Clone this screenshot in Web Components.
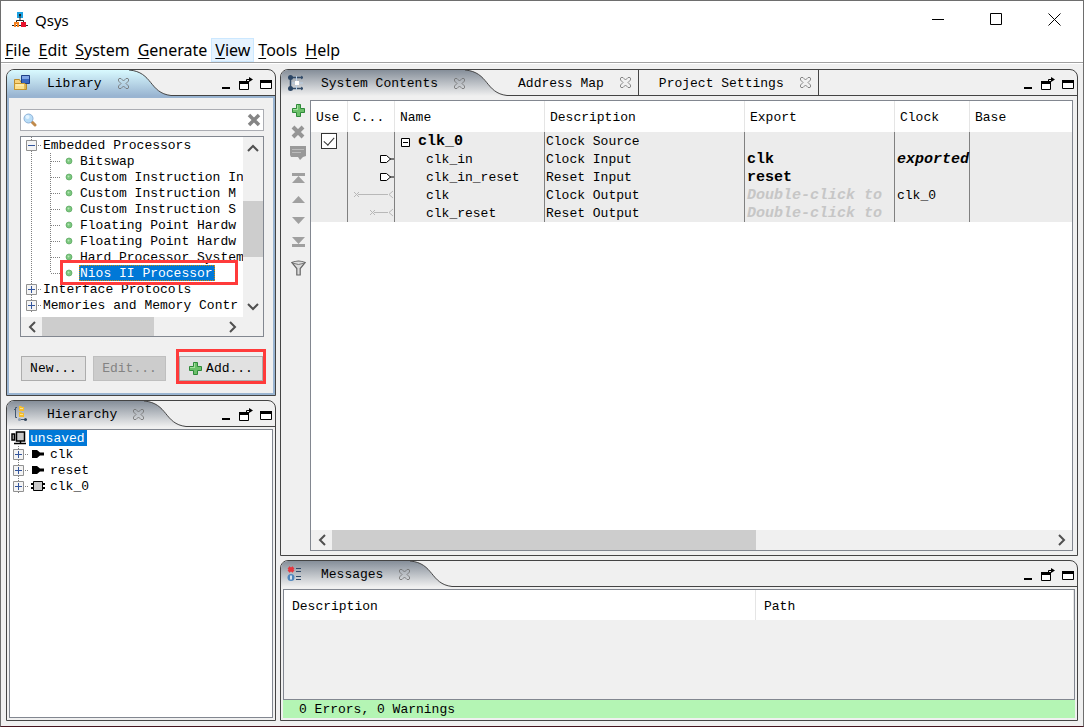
<!DOCTYPE html>
<html lang="en">
<head>
<meta charset="utf-8">
<title>Qsys</title>
<style>
  * { box-sizing: border-box; }
  body {
    margin: 0;
    height: 100vh;
    font: 13px/16px "Liberation Mono", "Noto Sans CJK SC", monospace;
    color: #000;
    background: #f0f0f0;
  }
</style>
</head>
<body>
<qsys-app></qsys-app>

<script>
// ================== //
// icons
const icons = {
  app: [16, 16, `<path fill="#1ba1e2" d="M5 0h6v6H5z"/><path fill="none" stroke="#222" d="M8 3v6M4.500 12V8.500h7V12M0 13.500h16"/><path fill="#222" d="M7 2h2v2H7z"/><path fill="#f58220" d="M2 10h5v5H5v-3H4v3H2z"/><path fill="#e8112d" d="M9 10h5v5H9z"/>`],
  library: [18, 18, `<path fill="#f7d27a" stroke="#b98a2b" d="M1.500 5.500h5l1 2h6v8h-12z"/><path fill="#3a68c0" stroke="#1f3f86" d="M8.500 1.500h8v8h-8z"/><path fill="#7fa5e6" d="M9 2h7v3H9z"/><path fill="#fbe08f" stroke="#c6952d" d="M1.500 15.500v-6h10.500v6z"/><path fill="#fff3c4" d="M3 10.500h8v1H3z"/>`],
  hierarchy: [16, 16, `<path fill="none" stroke="#44586f" d="M4 1.500H2.500v10H4M1 3.500h2M6 13.500h8"/><path fill="#f5bd2b" d="M6 0h2l1 1h2v4H6zM6 6h2l1 1h2v4H6z"/><path fill="#fbe08f" d="M7 2h3v1H7zM7 8h3v1H7z"/><circle cx="6.500" cy="13.500" r="1.500" fill="#8e9db0"/><circle cx="12.500" cy="13.500" r="1.500" fill="#33475e"/>`],
  system: [18, 18, `<path fill="none" stroke="#324b69" stroke-width="1.500" d="M3.500 3v11M3 3.500h13M3 14.500h13"/><path stroke="#324b69" d="M14 2l2 1.500-2 1.500M14 13l2 1.500-2 1.500" fill="none"/><circle cx="3.500" cy="3.500" r="2.500" fill="#2c4665"/><circle cx="3.500" cy="14.500" r="2.500" fill="#2c4665"/><path stroke="#b9cfe6" d="M9.500 2v14M5 9h11"/><path fill="#fff" d="M8 7h4v4H8z"/>`],
  messages: [16, 16, `<path fill="none" stroke="#e5373f" stroke-width="3" d="M1.500 1.500l5 4M6.500 1.500l-5 4"/><circle cx="4" cy="11.500" r="3.500" fill="#4f86bd"/><path stroke="#fff" stroke-width="1.500" d="M4 9.500v4"/><path stroke="#324b69" d="M9 2.500h5M9 5.500h5M9 10.500h5M9 13.500h5"/>`],
  tabClose: [11, 11, `<path fill="none" stroke="#707070" stroke-width=".8" d="M1 .5h2l2.500 2.500L8 .5h2l.5.5v2L8 5.500 10.500 8v2l-.5.5H8L5.500 8 3 10.500H1L.5 10V8L3 5.500.5 3V1z"/>`],
  minimize: [12, 14, `<path d="M2 10h8v2H2z"/>`],
  popout: [14, 14, `<path fill="#fff" stroke="#000" d="M.5 4.500h9v8h-9z"/><path d="M0 4h10v3H0z"/><path fill="none" stroke="#000" d="M7.500 5V2.500H12"/><path d="M10 0l4 2.500-4 2.500z"/>`],
  maximize: [12, 14, `<path fill="#fff" stroke="#000" d="M.5 3.500h11v8H.5z"/><path d="M0 3h12v3H0z"/>`],
  winMin: [13, 13, `<path d="M0 6h12v1H0z"/>`],
  winMax: [13, 13, `<path fill="none" stroke="#000" d="M.5.5h11v11H.5z"/>`],
  winClose: [13, 13, `<path fill="none" stroke="#000" d="M.5.5l12 12M12.500.5l-12 12"/>`],
  search: [14, 14, `<path stroke="#c08a4b" stroke-width="3" stroke-linecap="round" d="M9 9l3 3"/><circle cx="5.500" cy="5.500" r="4.500" fill="#b9ddf7" stroke="#8fb2d8"/><circle cx="4.500" cy="4" r="2" fill="#e4f4ff"/>`],
  clear: [14, 14, `<path stroke="#858585" stroke-width="3.500" d="M2 2l10 10M12 2L2 12"/>`],
  plus: [13, 13, `<path fill="#6cc06a" stroke="#2f8a3a" d="M4.500.5h4v4h4v4h-4v4h-4v-4h-4v-4h4z"/><path fill="#a6dfa0" d="M5 1h1v5H1V5h4z"/>`],
  cross: [14, 14, `<path stroke="#959595" stroke-width="4" d="M2 2l10 10M12 2L2 12"/>`],
  edit: [16, 16, `<path fill="#999" d="M0 1h16v10l-3 1-3 3-2-3H1l-1-2z"/><path stroke="#bbb" d="M2 4.500h12M2 7.500h9"/>`],
  top: [13, 11, `<path fill="#a0a0a0" d="M0 0h13v3H0zM6.500 3l6.500 7H0z"/>`],
  up: [13, 11, `<path fill="#a0a0a0" d="M6.500 2L13 9H0z"/>`],
  down: [13, 11, `<path fill="#a0a0a0" d="M6.500 9L0 2h13z"/>`],
  bottom: [13, 11, `<path fill="#a0a0a0" d="M0 8h13v3H0zM6.500 8L0 1h13z"/>`],
  filter: [15, 16, `<path fill="#ddd" stroke="#666" stroke-width="1.200" d="M.8 2.500q6.700-3 13.400 0L9.200 8.500V15H5.800V8.500z"/><path fill="none" stroke="#777" d="M1 3q6.500 3 13 0"/>`],
  ball: [8, 8, `<circle cx="4" cy="4" r="3" fill="#7ac77e" stroke="#5aa55f" stroke-width=".7"/><circle cx="3.500" cy="3.500" r="1" fill="#b5e6b5"/>`],
  chip: [16, 14, `<path fill="#c8c8c8" stroke="#000" stroke-width="1.500" d="M5.500 1h8v9h-8zM1 3h2.500v6H1z"/><path stroke="#000" stroke-width="1.500" d="M9.500 10v2M3 12.500h12"/>`],
  port: [16, 10, `<path d="M2 1h5l3 2.500h4v3h-4L7 9H2z"/>`],
  block: [16, 10, `<path stroke="#000" stroke-width="2" d="M1 3h14M1 7h14"/><path fill="#c8c8c8" stroke="#000" d="M3.500.5h9v9h-9z"/>`],
  arrowUp: [12, 8, `<path fill="none" stroke="#505050" stroke-width="2" d="M1 7l5-5 5 5"/>`],
  arrowDown: [12, 8, `<path fill="none" stroke="#505050" stroke-width="2" d="M1 1l5 5 5-5"/>`],
  arrowLeft: [8, 12, `<path fill="none" stroke="#505050" stroke-width="2" d="M7 1L2 6l5 5"/>`],
  arrowRight: [8, 12, `<path fill="none" stroke="#505050" stroke-width="2" d="M1 1l5 5-5 5"/>`],
};

const base = `
  <style>
    * { box-sizing: border-box; }
    button {
      appearance: none;
      border: none;
      background: none;
      padding: 0;
      margin: 0;
      font: inherit;
      color: inherit;
      display: inline-flex;
      align-items: center;
      justify-content: center;
    }
  </style>`;

// every element renders once, into an open shadow root
class QElement extends HTMLElement {
  constructor() {
    super();
    this.attachShadow({ mode: "open" });
  }
  connectedCallback() {
    this.shadowRoot.innerHTML = base + this.render();
  }
}

class QIcon extends QElement {
  render() {
    const [w, h, body] = icons[this.getAttribute("name")];
    return `
      <style>
        :host { display: inline-flex; flex: none; }
        svg { display: block; }
      </style>
      <svg width="${w}" height="${h}" viewBox="0 0 ${w} ${h}" aria-hidden="true">${body}</svg>`;
  }
}

// ================== //
// window chrome
class TitleBar extends QElement {
  render() {
    return `
      <style>
        :host {
          display: flex;
          align-items: center;
          height: 37px;
          padding-left: 11px;
          background: #fff;
          font: 15px/20px "Noto Sans", "Open Sans", sans-serif;
        }
        .title { flex: 1; padding-left: 7px; }
        button { width: 58px; height: 36px; }
      </style>
      <q-icon name="app"></q-icon>
      <span class="title"><slot></slot></span>
      <button aria-label="Minimize window"><q-icon name="winMin"></q-icon></button>
      <button aria-label="Maximize window"><q-icon name="winMax"></q-icon></button>
      <button aria-label="Close window"><q-icon name="winClose"></q-icon></button>`;
  }
}

class MenuBar extends QElement {
  render() {
    const items = this.getAttribute("items").split(",");
    const current = this.getAttribute("current");
    return `
      <style>
        :host {
          display: block;
          background: #fff;
          border-bottom: 1px solid #a0a0a0;
          font: 16px/22px "Noto Sans", "Open Sans", sans-serif;
        }
        nav { display: flex; height: 24px; }
        button { padding: 0 4px; height: 24px; }
        button.current { background: #e5f3ff; box-shadow: inset 0 0 0 1px #cce8ff; }
        u { text-underline-offset: 2px; }
      </style>
      <nav>${items
        .map((t) => `<button class="${t == current ? "current" : ""}"><span><u>${t[0]}</u>${t.slice(1)}</span></button>`)
        .join("")}</nav>`;
  }
}

// ================== //
// docked panel with the curved tab
class DockPanel extends QElement {
  render() {
    const active = this.hasAttribute("active");
    const from = active ? "#d9faff" : "#858e99";
    const to = active ? "#99b4d1" : "#f0f0f0";
    return `
      <style>
        :host {
          display: flex;
          flex-direction: column;
          min-width: 0;
          min-height: 0;
          border: 1px solid #444;
          border-radius: 8px 8px 0 0;
          overflow: hidden;
        }
        header { display: flex; height: 26px; flex: none; }
        .tab {
          display: flex;
          align-items: center;
          padding-left: 6px;
          background: linear-gradient(${from}, ${to});
        }
        .name { width: 18px; margin-right: 16px; display: flex; }
        .label { padding-top: 2px; }
        .tab button { margin-left: 16px; }
        .curve { flex: none; display: block; }
        .rest {
          flex: 1;
          display: flex;
          justify-content: space-between;
          border-bottom: 1px solid #444;
        }
        .tools { display: flex; align-items: center; gap: 7px; padding: 3px 3px 0 0; margin-left: auto; }
        .content {
          flex: 1;
          min-height: 0;
          display: flex;
          flex-direction: column;
          border: ${active ? "2px solid #99b4d1" : "none"};
        }
      </style>
      <header>
        <div class="tab">
          <span class="name"><q-icon name="${this.getAttribute("icon")}"></q-icon></span>
          <span class="label">${this.getAttribute("label")}</span>
          <button aria-label="Close ${this.getAttribute("label")}"><q-icon name="tabClose"></q-icon></button>
        </div>
        <svg class="curve" width="42" height="26" viewBox="0 0 42 26" aria-hidden="true">
          <defs>
            <linearGradient id="g" x2="0" y2="1"><stop stop-color="${from}"/><stop offset="1" stop-color="${to}"/></linearGradient>
          </defs>
          <path fill="url(#g)" d="M0 0C24 2 20 23 42 25.500V26H0z"/>
          <path fill="none" stroke="#444" d="M0 0C24 2 20 23 42 25.500"/>
        </svg>
        <div class="rest">
          <slot name="tabs"></slot>
          <div class="tools">
            <button aria-label="Minimize"><q-icon name="minimize"></q-icon></button>
            <button aria-label="Detach"><q-icon name="popout"></q-icon></button>
            <button aria-label="Maximize"><q-icon name="maximize"></q-icon></button>
          </div>
        </div>
      </header>
      <div class="content"><slot></slot></div>`;
  }
}

class DockTab extends QElement {
  render() {
    return `
      <style>
        :host {
          display: flex;
          align-items: center;
          height: 25px;
          padding: 0 7px 0 20px;
          border-right: 1px solid #444;
        }
        :host([first]) { padding-left: 11px; }
        .label { padding-top: 2px; }
        .close { margin-left: 16px; }
      </style>
      <button class="label"><slot></slot></button>
      <button class="close" aria-label="Close tab"><q-icon name="tabClose"></q-icon></button>`;
  }
}

class ScrollBar extends QElement {
  render() {
    const vertical = this.hasAttribute("vertical");
    return `
      <style>
        :host {
          display: flex;
          flex-direction: ${vertical ? "column" : "row"};
          background: #f0f0f0;
          min-width: 0;
          min-height: 0;
        }
        button { flex: none; width: ${vertical ? "auto" : "21px"}; height: ${vertical ? "21px" : "auto"}; }
        .track { flex: 1; display: flex; flex-direction: inherit; min-width: 0; min-height: 0; }
        .before { flex: 0 0 ${this.getAttribute("from")}%; }
        .thumb { flex: 0 0 ${this.getAttribute("size")}%; background: #cdcdcd; }
      </style>
      <button aria-label="Scroll back"><q-icon name="${vertical ? "arrowUp" : "arrowLeft"}"></q-icon></button>
      <div class="track"><div class="before"></div><div class="thumb"></div></div>
      <button aria-label="Scroll forward"><q-icon name="${vertical ? "arrowDown" : "arrowRight"}"></q-icon></button>`;
  }
}

// ================== //
// tree
const toggleBox = (open) => `
  <path fill="#f4f4f4" stroke="#919191" d="M5.500 3.500h10v10h-10z"/>
  <path stroke="#33559c" d="M7 8.500h7${open ? "" : "M10.500 5v7"}"/>`;

const gutters = {
  open: [21, 0, `<path d="M10.500 0v16M17 8.500h4" stroke="#808080" stroke-dasharray="1 1"/>${toggleBox(true)}`],
  closed: [21, 0, `<path d="M10.500 0v16M17 8.500h4" stroke="#808080" stroke-dasharray="1 1"/>${toggleBox(false)}`],
  small: [19, 2, `<path d="M10.500 0v16M17 8.500h4" stroke="#808080" stroke-dasharray="1 1"/>${toggleBox(false)}`],
  leaf: [39, 0, `<path d="M10.500 0v16M29.500 0v16M30 8.500h9" fill="none" stroke="#808080" stroke-dasharray="1 1"/>`],
  last: [39, 0, `<path d="M10.500 0v16M29.500 0v8M30 8.500h9" fill="none" stroke="#808080" stroke-dasharray="1 1"/>`],
  none: [0, 0, ""],
};

class TreeRow extends QElement {
  render() {
    const [w, x, body] = gutters[this.getAttribute("gutter")];
    const icon = this.getAttribute("icon");
    return `
      <style>
        :host { display: flex; align-items: center; height: 16px; white-space: nowrap; position: relative; }
        svg { display: block; flex: none; }
        .icon { display: flex; justify-content: center; width: 18px; flex: none; }
        .label { height: 16px; padding: 2px 2px 0 1px; line-height: 14px; }
        .icon + .label { margin-left: ${w == 19 ? 2 : 1}px; }
        :host([selected]) .label { background: #0078d7; color: #fff; }
        :host([marked]) .label { outline: 1px dotted #d78800; outline-offset: -1px; }
        .mark { display: none; }
        /* red frame drawn over the row and its neighbours */
        :host([marked]) .mark {
          display: block;
          position: absolute;
          inset: -5px 5px -4px 39px;
          border: 3px solid #ff3b3b;
          z-index: 1;
        }
      </style>
      ${w ? `<svg width="${w}" height="16" viewBox="${x} 0 ${w} 16" aria-hidden="true">${body}</svg>` : ""}
      ${icon ? `<span class="icon"><q-icon name="${icon}"></q-icon></span>` : ""}
      <span class="label"><slot></slot></span>
      <span class="mark"></span>`;
  }
}

class LibraryView extends QElement {
  render() {
    return `
      <style>
        :host { display: flex; flex-direction: column; flex: 1; min-height: 0; padding: 11px 9px 12px 11px; }
        .search {
          display: flex;
          align-items: center;
          height: 22px;
          padding: 0 2px;
          background: #fff;
          border: 1px solid #abadb3;
        }
        input { flex: 1; min-width: 0; border: none; outline: none; font: inherit; background: none; }
        .tree {
          flex: 1;
          min-height: 0;
          margin-top: 5px;
          display: grid;
          grid-template: minmax(0, 1fr) 19px / minmax(0, 1fr) 20px;
          border: 1px solid #828790;
        }
        .view { background: #fff; overflow: hidden; }
        .actions { display: flex; gap: 7px; margin-top: 19px; padding: 0 1px; }
        .actions button { height: 25px; padding: 0 7px; background: #e1e1e1; border: 1px solid #adadad; }
        .actions .edit { background: #ccc; border-color: #bfbfbf; color: #838383; width: 73px; }
        .actions .new { width: 65px; }
        .actions .add { position: relative; margin-left: 6px; flex: 1; gap: 4px; }
        .add::after { content: ""; position: absolute; inset: -8px -4px -4px; border: 3px solid #ff3b3b; }
      </style>
      <div class="search">
        <q-icon name="search"></q-icon>
        <input type="text" aria-label="Search library">
        <button aria-label="Clear search"><q-icon name="clear"></q-icon></button>
      </div>
      <div class="tree">
        <div class="view">
          <tree-row gutter="open">Embedded Processors</tree-row>
          <tree-row gutter="leaf" icon="ball">Bitswap</tree-row>
          <tree-row gutter="leaf" icon="ball">Custom Instruction In</tree-row>
          <tree-row gutter="leaf" icon="ball">Custom Instruction M</tree-row>
          <tree-row gutter="leaf" icon="ball">Custom Instruction S</tree-row>
          <tree-row gutter="leaf" icon="ball">Floating Point Hardw</tree-row>
          <tree-row gutter="leaf" icon="ball">Floating Point Hardw</tree-row>
          <tree-row gutter="leaf" icon="ball">Hard Processor System</tree-row>
          <tree-row gutter="last" icon="ball" selected marked>Nios II Processor</tree-row>
          <tree-row gutter="closed">Interface Protocols</tree-row>
          <tree-row gutter="closed">Memories and Memory Contr</tree-row>
        </div>
        <scroll-bar vertical from="31" size="41"></scroll-bar>
        <scroll-bar from="0" size="62"></scroll-bar>
      </div>
      <div class="actions">
        <button class="new">New...</button>
        <button class="edit" disabled>Edit...</button>
        <button class="add"><q-icon name="plus"></q-icon>Add...</button>
      </div>`;
  }
}

class HierarchyView extends QElement {
  render() {
    return `
      <style>
        :host { display: block; flex: 1; margin: 2px; background: #fff; border: 1px solid #828790; }
      </style>
      <tree-row gutter="none" icon="chip" selected>unsaved</tree-row>
      <tree-row gutter="small" icon="port">clk</tree-row>
      <tree-row gutter="small" icon="port">reset</tree-row>
      <tree-row gutter="small" icon="block">clk_0</tree-row>`;
  }
}

// ================== //
// system contents
const wires = {
  input: `<path fill="#fff" stroke="#000" d="M32.500 5.500h6l4 3.500-4 3.500h-6z"/><path stroke="#000" d="M42 9h6"/>`,
  clock: `<path fill="none" stroke="#b8b8b8" d="M6 6l5 5M11 6l-5 5M10 8.500h30M45 5l-4 3.500 4 3.500"/>`,
  reset: `<path fill="none" stroke="#b8b8b8" d="M22 6l5 5M27 6l-5 5M26 8.500h14M45 5l-4 3.500 4 3.500"/>`,
};

const rows = [
  { root: true, name: "clk_0", desc: "Clock Source" },
  { wire: "input", name: "clk_in", desc: "Clock Input", exp: "clk", clock: "<em>exported</em>" },
  { wire: "input", name: "clk_in_reset", desc: "Reset Input", exp: "reset" },
  { wire: "clock", name: "clk", desc: "Clock Output", hint: true, clock: "clk_0" },
  { wire: "reset", name: "clk_reset", desc: "Reset Output", hint: true },
];

class SystemView extends QElement {
  row(r) {
    const use = r.root ? `<input type="checkbox" aria-label="Use clk_0" checked>` : "";
    const wire = r.wire ? `<svg width="47" height="18" viewBox="0 0 47 18" aria-hidden="true">${wires[r.wire]}</svg>` : "";
    const name = r.root
      ? `<div class="root"><svg width="11" height="11" viewBox="0 0 11 11" aria-hidden="true"><path fill="#fff" stroke="#000" d="M1.500 1.500h8v8h-8zM3 5.500h5"/></svg><b>${r.name}</b></div>`
      : `<span class="child">${r.name}</span>`;
    const exp = r.hint ? `<em class="hint">Double-click to</em>` : `<b>${r.exp || ""}</b>`;
    return `<tr><td>${use}</td><td>${wire}</td><td>${name}</td><td>${r.desc}</td><td>${exp}</td><td>${r.clock || ""}</td><td></td></tr>`;
  }
  render() {
    const tools = ["plus", "cross", "edit", "top", "up", "down", "bottom", "filter"];
    return `
      <style>
        :host { display: flex; flex: 1; min-height: 0; padding: 4px 4px 4px 0; }
        .strip { display: flex; flex-direction: column; align-items: center; width: 29px; padding: 0 0 0 5px; }
        .strip button { height: 21px; flex: none; }
        .strip .gap { margin-top: 5px; }
        .box {
          flex: 1;
          min-width: 0;
          display: flex;
          flex-direction: column;
          background: #fff;
          border: 1px solid #828790;
        }
        .view { flex: 1; min-height: 0; overflow: hidden; }
        table { width: 100%; table-layout: fixed; border-collapse: separate; border-spacing: 0; }
        th {
          height: 31px;
          padding: 3px 0 0 5px;
          text-align: left;
          font-weight: normal;
          border-right: 1px solid #e5e5e5;
          white-space: nowrap;
        }
        td {
          height: 18px;
          padding: 2px 0 0 1px;
          line-height: 16px;
          white-space: nowrap;
          background: #ececec;
          border-right: 1px solid #808080;
        }
        th:last-child, td:last-child { border-right: none; }
        td svg { display: block; }
        td:nth-child(1), td:nth-child(2) { padding: 0; overflow: hidden; }
        td:nth-child(5), td:nth-child(6) { padding-left: 2px; }
        b, em { font-size: 15px; font-weight: bold; display: block; height: 16px; }
        .hint { color: #c6c6c6; }
        .root { display: flex; align-items: center; gap: 7px; padding-left: 4px; }
        .child { padding-left: 30px; }
        input {
          appearance: none;
          display: block;
          position: relative;
          width: 16px;
          height: 16px;
          margin: 0 auto;
          background: #fff;
          border: 1px solid #333;
        }
        input:checked::after {
          content: "";
          position: absolute;
          left: 4px;
          top: 1px;
          width: 5px;
          height: 9px;
          border: solid #333;
          border-width: 0 1px 1px 0;
          transform: rotate(42deg);
        }
        scroll-bar { height: 20px; flex: none; }
      </style>
      <div class="strip">
        ${tools.map((t) => `<button class="${t == "top" || t == "filter" ? "gap" : ""}" aria-label="${t}"><q-icon name="${t}"></q-icon></button>`).join("")}
      </div>
      <div class="box">
        <div class="view">
          <table>
            <colgroup><col width="37"><col width="47"><col width="150"><col width="200"><col width="150"><col width="75"><col></colgroup>
            <thead><tr><th>Use</th><th>C...</th><th>Name</th><th>Description</th><th>Export</th><th>Clock</th><th>Base</th></tr></thead>
            <tbody>${rows.map((r) => this.row(r)).join("")}</tbody>
          </table>
        </div>
        <scroll-bar from="0" size="59"></scroll-bar>
      </div>`;
  }
}

class MessagesView extends QElement {
  render() {
    return `
      <style>
        :host { display: flex; flex-direction: column; flex: 1; min-height: 0; padding: 2px; }
        .box { flex: 1; border: 1px solid #828790; }
        table { width: 100%; table-layout: fixed; border-collapse: separate; border-spacing: 0; }
        th {
          height: 30px;
          padding: 4px 0 0 8px;
          text-align: left;
          font-weight: normal;
          background: #fff;
          border-right: 1px solid #e5e5e5;
        }
        .status { height: 18px; padding: 2px 0 0 16px; line-height: 16px; background: #b4f5b4; }
      </style>
      <div class="box">
        <table>
          <colgroup><col width="472"><col></colgroup>
          <thead><tr><th>Description</th><th>Path</th></tr></thead>
        </table>
      </div>
      <div class="status">0 Errors, 0 Warnings</div>`;
  }
}

class QsysApp extends QElement {
  render() {
    return `
      <style>
        :host {
          display: flex;
          flex-direction: column;
          height: 100vh;
          border: 1px solid #6e6e6e;
          border-bottom-color: #45141f;
        }
        main { flex: 1; min-height: 0; display: flex; gap: 4px; padding: 5px; border-top: 1px solid #fff; }
        .column { display: grid; gap: 4px; grid-template-columns: minmax(0, 1fr); }
        .left { flex: 0 0 270px; grid-template-rows: minmax(0, 327fr) minmax(0, 321fr); }
        .right { flex: 1; min-width: 0; grid-template-rows: minmax(0, 487fr) minmax(0, 161fr); }
        .tabs { display: flex; }
      </style>
      <title-bar>Qsys</title-bar>
      <menu-bar items="File,Edit,System,Generate,View,Tools,Help" current="View"></menu-bar>
      <main>
        <div class="column left">
          <dock-panel active icon="library" label="Library"><library-view></library-view></dock-panel>
          <dock-panel icon="hierarchy" label="Hierarchy"><hierarchy-view></hierarchy-view></dock-panel>
        </div>
        <div class="column right">
          <dock-panel icon="system" label="System Contents">
            <div class="tabs" slot="tabs">
              <dock-tab first>Address Map</dock-tab>
              <dock-tab>Project Settings</dock-tab>
            </div>
            <system-view></system-view>
          </dock-panel>
          <dock-panel icon="messages" label="Messages"><messages-view></messages-view></dock-panel>
        </div>
      </main>`;
  }
}

customElements.define("q-icon", QIcon);
customElements.define("title-bar", TitleBar);
customElements.define("menu-bar", MenuBar);
customElements.define("dock-panel", DockPanel);
customElements.define("dock-tab", DockTab);
customElements.define("scroll-bar", ScrollBar);
customElements.define("tree-row", TreeRow);
customElements.define("library-view", LibraryView);
customElements.define("hierarchy-view", HierarchyView);
customElements.define("system-view", SystemView);
customElements.define("messages-view", MessagesView);
customElements.define("qsys-app", QsysApp);
</script>
</body>
</html>
